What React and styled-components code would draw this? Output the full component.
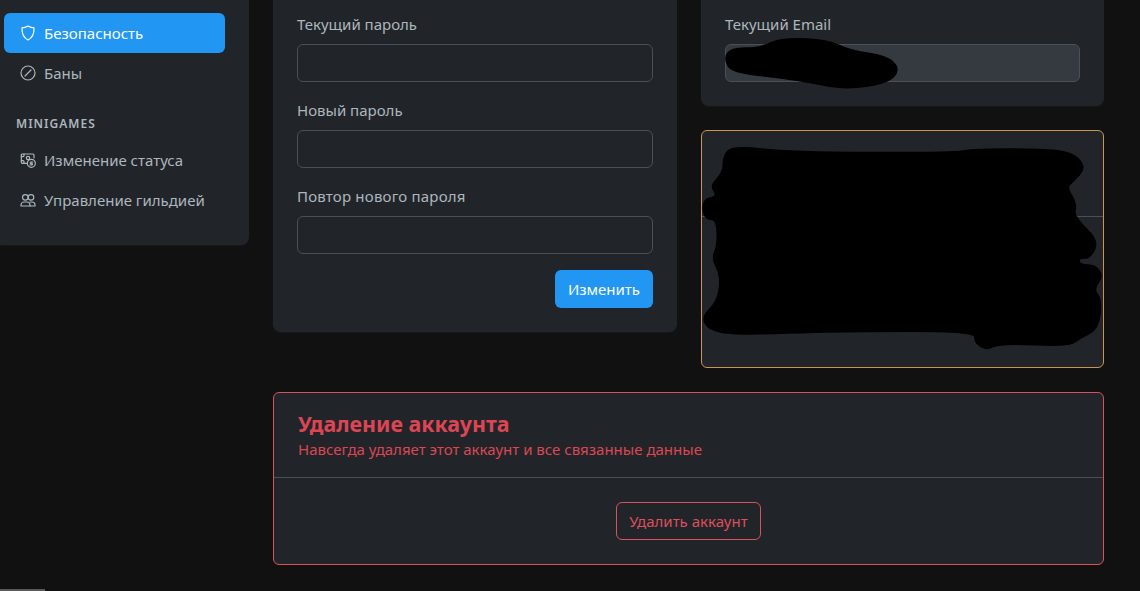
import React from 'react'
import styled, { createGlobalStyle } from 'styled-components'

const GlobalStyle = createGlobalStyle`
  html, body {
    margin: 0;
    height: 591px;
    overflow: hidden;
    background: #111112;
  }
  * {
    box-sizing: border-box;
  }
`

const Page = styled.div`
  position: relative;
  display: flex;
  align-items: flex-start;
  height: 591px;
  overflow: hidden;
  background: #111112;
  font-family: 'Noto Sans', 'Open Sans', sans-serif;
  font-size: 15px;
  line-height: 22px;
  color: #adb5bd;
`

const Sidebar = styled.aside`
  flex: none;
  width: 249px;
  height: 245px;
  padding: 13px 24px 0 4px;
  background: #212529;
  border-radius: 0 0 8px 0;
  box-shadow: 0 1px 2px rgba(255, 255, 255, 0.04);
`

const NavItem = styled.a`
  display: flex;
  align-items: center;
  gap: 8px;
  height: 40px;
  padding-left: 16px;
  border-radius: 6px;
  color: ${(p) => (p.$active ? '#fff' : '#adb5bd')};
  background: ${(p) => (p.$active ? '#2196f3' : 'transparent')};

  svg {
    flex: none;
    width: 16px;
    height: 16px;
  }
`

const NavHeading = styled.div`
  margin: 21px 0 6px 12px;
  height: 20px;
  font-size: 12px;
  line-height: 20px;
  font-weight: 600;
  letter-spacing: 1px;
  color: #adb5bd;
`

const Main = styled.main`
  flex: none;
  width: 831px;
  margin-left: 24px;
  display: flex;
  flex-direction: column;
  gap: 24px;
`

const Columns = styled.div`
  display: grid;
  grid-template-columns: 404px 403px;
  gap: 24px;
  align-items: start;
`

const Stack = styled.div`
  display: flex;
  flex-direction: column;
  gap: 24px;
`

const Card = styled.section`
  padding: 13px 24px 24px;
  background: #212529;
  border-radius: 0 0 8px 8px;
  box-shadow: 0 1px 2px rgba(255, 255, 255, 0.04);
`

const Field = styled.div`
  margin-bottom: ${(p) => (p.$last ? '16px' : '17px')};
`

const Label = styled.label`
  display: block;
  margin-bottom: 9px;
  letter-spacing: ${(p) => (p.$wide ? '0.2px' : '0')};
`

const InputWrap = styled.div`
  position: relative;
`

const Input = styled.input`
  display: block;
  width: 100%;
  height: 38px;
  border: 1px solid #495057;
  border-radius: 6px;
  background: ${(p) => (p.disabled ? '#343a40' : '#212529')};
  outline: none;
`

const Actions = styled.div`
  display: flex;
  justify-content: flex-end;
`

const PrimaryButton = styled.button`
  height: 38px;
  padding: 0 13px;
  border: 0;
  border-radius: 6px;
  background: #2196f3;
  color: #fff;
  font: inherit;
`

const Redacted = styled.svg`
  position: absolute;
  inset: 0;
  width: 100%;
  height: 100%;
  overflow: visible;
  pointer-events: none;
`

const WarnCard = styled.section`
  position: relative;
  height: 238px;
  background: #212529;
  border: 1px solid #c9954f;
  border-radius: 6px;
`

const WarnHeader = styled.div`
  height: 86px;
  border-bottom: 1px solid #495057;
`

const DangerCard = styled.section`
  width: 831px;
  height: 173px;
  background: #212529;
  border: 1px solid #d9505e;
  border-radius: 6px;
`

const DangerHeader = styled.header`
  height: 85px;
  padding: 16px 24px 0;
  border-bottom: 1px solid #495057;
`

const DangerTitle = styled.h2`
  margin: 0;
  font-size: 21.4px;
  line-height: 30px;
  font-weight: 700;
  color: #dc4654;
`

const DangerText = styled.p`
  margin: 0;
  font-size: 15px;
  line-height: 20px;
  color: #dc4654;
`

const DangerBody = styled.div`
  display: flex;
  justify-content: center;
  padding-top: 24px;
`

const DangerButton = styled.button`
  height: 38px;
  padding: 0 12px;
  border: 1px solid #d9505e;
  border-radius: 6px;
  background: transparent;
  color: #dc4f5c;
  font: inherit;
`

const ScrollThumb = styled.div`
  position: absolute;
  left: 0;
  bottom: 0;
  width: 45px;
  height: 2px;
  background: #5a5a5a;
`

const iconProps = {
  viewBox: '0 0 24 24',
  fill: 'none',
  stroke: 'currentColor',
  strokeWidth: 1.8,
  strokeLinecap: 'round',
  strokeLinejoin: 'round',
}

const ShieldIcon = () => (
  <svg {...iconProps}>
    <path d="M12 1.500c3 1.800 5.900 2.700 9 2.900.4 8-2.100 14.300-9 18.100C5.100 18.700 2.600 12.400 3 4.400c3.100-.2 6-1.100 9-2.900z" />
  </svg>
)

const BanIcon = () => (
  <svg {...iconProps}>
    <circle cx="12" cy="12" r="10.500" />
    <path d="M7.500 16.500 16.500 7.500" />
  </svg>
)

const CashIcon = () => (
  <svg {...iconProps}>
    <path d="M11 17H3.500A1.500 1.500 0 0 1 2 15.500v-11A1.500 1.500 0 0 1 3.500 3h16A1.500 1.500 0 0 1 21 4.500V9" />
    <path d="M2 7h2.500A1.500 1.500 0 0 0 6 5.500V3" />
    <path d="M2 13h2.500A1.500 1.500 0 0 1 6 14.500V17" />
    <circle cx="12" cy="9" r="2.500" />
    <circle cx="17" cy="17" r="6" />
    <path d="M19 15h-2.500a1 1 0 0 0 0 2.200h1a1 1 0 0 1 0 2.200H15" />
  </svg>
)

const GuildIcon = () => (
  <svg {...iconProps}>
    <circle cx="8" cy="8" r="4.200" />
    <circle cx="16.500" cy="8" r="4.200" />
    <path d="M1.500 21v-1.500A4.500 4.500 0 0 1 6 15h4.500a4.500 4.500 0 0 1 4.500 4.500V21z" />
    <path d="M15 15h3a4.500 4.500 0 0 1 4.500 4.500V21H15" />
  </svg>
)

// the marker scribbles have round edges, so go through the midpoints of the outline
const smoothOutline = (pts) => {
  const mid = (a, b) => [(a[0] + b[0]) / 2, (a[1] + b[1]) / 2]
  let d = `M${mid(pts[pts.length - 1], pts[0]).join(' ')}`
  pts.forEach((p, i) => {
    d += `Q${p.join(' ')} ${mid(p, pts[(i + 1) % pts.length]).join(' ')}`
  })
  return d + 'Z'
}

const emailBlot = [
  [100, 178], [120, 142], [210, 142], [270, 112], [410, 116], [480, 150], [590, 165],
  [632, 205], [600, 250], [470, 270], [370, 252], [280, 236], [125, 220],
]

const warnBlot = [
  [95, 465], [125, 432], [300, 452], [780, 454], [860, 442], [1050, 442], [1150, 452],
  [1195, 500], [1150, 548], [1135, 560], [1165, 610], [1155, 648], [1232, 720], [1205, 778],
  [1172, 775], [1172, 792], [1222, 795], [1245, 830], [1215, 868], [1240, 900], [1230, 990],
  [1175, 1018], [1140, 1044], [930, 1034], [890, 1056], [852, 1030], [855, 998], [480, 998],
  [285, 1004], [130, 1008], [50, 994], [30, 950], [78, 905], [88, 830], [60, 775], [78, 735],
  [75, 658], [45, 660], [30, 625], [42, 592], [78, 587], [55, 555], [95, 515],
]

const FormField = ({ label, last, wide }) => (
  <Field $last={last}>
    <Label $wide={wide}>{label}</Label>
    <Input type="password" />
  </Field>
)

export default function App() {
  return (
    <Page>
      <GlobalStyle />
      <Sidebar>
        <NavItem $active>
          <ShieldIcon />
          Безопасность
        </NavItem>
        <NavItem>
          <BanIcon />
          Баны
        </NavItem>
        <NavHeading>MINIGAMES</NavHeading>
        <NavItem>
          <CashIcon />
          Изменение статуса
        </NavItem>
        <NavItem>
          <GuildIcon />
          Управление гильдией
        </NavItem>
      </Sidebar>
      <Main>
        <Columns>
          <Card>
            <FormField label="Текущий пароль" />
            <FormField label="Новый пароль" />
            <FormField label="Повтор нового пароля" last wide />
            <Actions>
              <PrimaryButton>Изменить</PrimaryButton>
            </Actions>
          </Card>
          <Stack>
            <Card>
              <Label>Текущий Email</Label>
              <InputWrap>
                <Input disabled />
                <Redacted viewBox="105 132 1065 114" preserveAspectRatio="none">
                  <path d={smoothOutline(emailBlot)} fill="#000" />
                </Redacted>
              </InputWrap>
            </Card>
            <WarnCard>
              <WarnHeader />
              <Redacted viewBox="33 390 1209 714" preserveAspectRatio="none">
                <path d={smoothOutline(warnBlot)} fill="#000" />
              </Redacted>
            </WarnCard>
          </Stack>
        </Columns>
        <DangerCard>
          <DangerHeader>
            <DangerTitle>Удаление аккаунта</DangerTitle>
            <DangerText>Навсегда удаляет этот аккаунт и все связанные данные</DangerText>
          </DangerHeader>
          <DangerBody>
            <DangerButton>Удалить аккаунт</DangerButton>
          </DangerBody>
        </DangerCard>
      </Main>
      <ScrollThumb />
    </Page>
  )
}
